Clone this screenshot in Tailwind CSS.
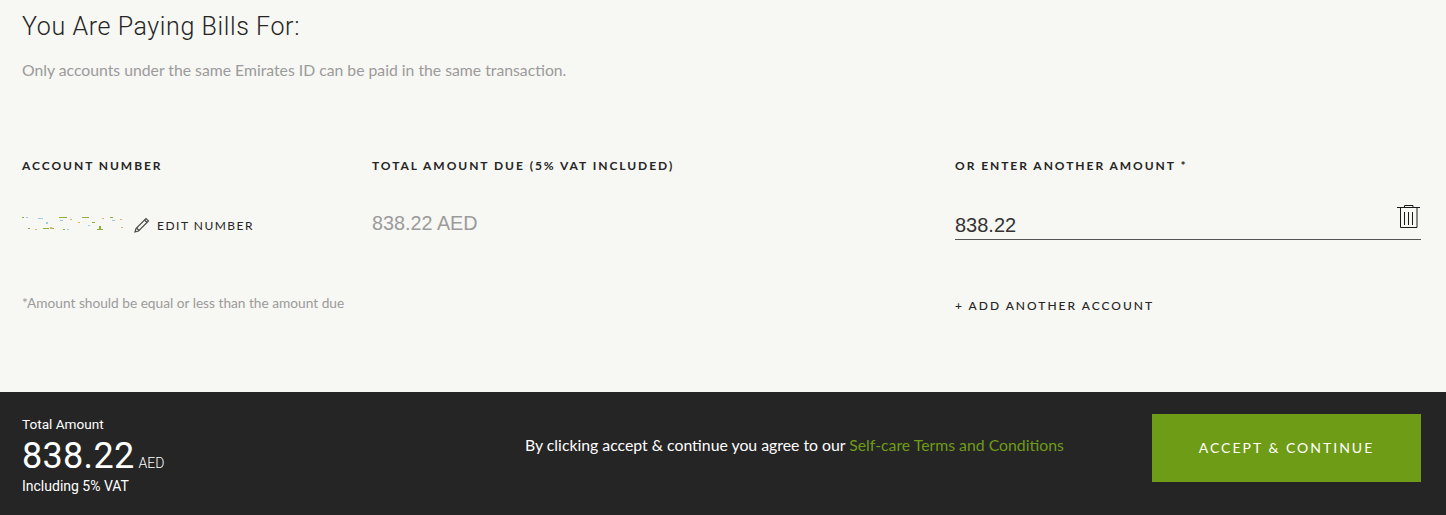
<!DOCTYPE html>
<html lang="en">
<head>
    <meta charset="UTF-8">
    <title>Pay Bills</title>
    <script src="https://cdn.jsdelivr.net/npm/@tailwindcss/browser@4"></script>
</head>
<body class="bg-[#f7f7f3] font-['Lato',sans-serif]">
    <div class="w-[1446px] h-[515px] flex flex-col overflow-hidden">

        <!-- Main section -->
        <div class="h-[392px] pl-[22px] pr-[25px]">
            <h1 class="pt-[10px] h-[44px] text-[25px] leading-[34px] tracking-[0.6px] font-light text-[#252525] font-['Roboto',sans-serif]">You Are Paying Bills For:</h1>
            <p class="mt-[16px] h-[20px] text-[15.75px] leading-[20px] text-[#9b9b9b]">Only accounts under the same Emirates ID can be paid in the same transaction.</p>

            <!-- Labels -->
            <div class="mt-[76px] grid grid-cols-[350px_583px_466px] text-[12px] leading-[20px] font-bold tracking-[1.95px] text-[#252525]">
                <div>ACCOUNT NUMBER</div>
                <div>TOTAL AMOUNT DUE (5% VAT INCLUDED)</div>
                <div>OR ENTER ANOTHER AMOUNT *</div>
            </div>

            <!-- Row -->
            <div class="mt-[24px] grid grid-cols-[350px_583px_466px] h-[40px]">
                <div class="flex items-start pt-[16px]">
                    <!-- masked account number -->
                    <svg width="104" height="16" viewBox="0 0 104 16" class="block">
                        <g fill="#8fae3c"><rect x="0" y="1" width="2" height="1"/><rect x="6" y="12" width="2" height="1"/><rect x="21" y="12" width="6" height="1"/><rect x="37" y="1" width="8" height="1"/><rect x="41" y="13" width="2" height="1"/><rect x="60" y="1" width="7" height="1"/><rect x="70" y="6" width="3" height="1"/><rect x="75" y="13" width="6" height="1"/><rect x="88" y="1" width="3" height="1"/><rect x="77" y="10" width="2" height="3"/><rect x="30" y="12" width="2" height="1"/></g>
                        <g fill="#9ccbe4"><rect x="4" y="1" width="2" height="1"/><rect x="16" y="2" width="5" height="1"/><rect x="24" y="6" width="2" height="2"/><rect x="45" y="13" width="2" height="1"/><rect x="90" y="4" width="3" height="1"/><rect x="38" y="4" width="3" height="1"/><rect x="66" y="9" width="2" height="1"/></g>
                        <g fill="#e0b273"><rect x="28" y="11" width="2" height="2"/><rect x="48" y="3" width="2" height="1"/><rect x="80" y="2" width="2" height="1"/><rect x="98" y="3" width="2" height="1"/><rect x="99" y="11" width="2" height="1"/><rect x="13" y="13" width="2" height="1"/><rect x="56" y="6" width="2" height="1"/></g>
                    </svg>
                    <svg width="16" height="16" viewBox="0 0 16 16" fill="none" stroke="#4a4a4a" stroke-width="1.2" class="ml-[8px] mt-[1px] block">
                        <path d="M1 15l1-3.500L12 1.500l2.500 2.500L4.500 14z"/>
                        <path d="M2.500 11l2.500 2.500M10.500 3l2.500 2.500"/>
                    </svg>
                    <span class="ml-[7px] mt-[3px] text-[12px] leading-[14px] tracking-[1.5px] text-[#252525]">EDIT NUMBER</span>
                </div>
                <div class="text-[19.8px] leading-[24px] pt-[11px] text-[#9b9b9b] font-['Liberation_Sans',sans-serif]">838.22 AED</div>
                <div class="relative h-[40px] border-b border-[#555] font-['Liberation_Sans',sans-serif] text-[20px] leading-[24px] text-[#333]">
                    <div class="pt-[13px]">838.22</div>
                    <svg width="24" height="24" viewBox="0 0 24 24" fill="none" stroke="#1a1a1a" class="absolute right-0 top-[4px]">
                        <path d="M0 3.500h23M7.500 3V1.500h8.500V3M3.500 4v19.500h16.500V4M7.500 8v13M11.500 8v13M15.500 8v13"/>
                    </svg>
                </div>
            </div>

            <!-- Note -->
            <div class="mt-[49px] grid grid-cols-[933px_466px]">
                <div class="pt-[4px] text-[13.7px] leading-[20px] text-[#9b9b9b]">*Amount should be equal or less than the amount due</div>
                <div class="pt-[7px] text-[12px] leading-[20px] tracking-[2px] font-medium text-[#252525]">+ ADD ANOTHER ACCOUNT</div>
            </div>
        </div>

        <!-- Footer -->
        <div class="h-[123px] bg-[#252525] pl-[22px] pr-[25px] flex items-center text-white">
            <div class="w-[503px] pt-[2px] font-['Roboto',sans-serif]">
                <div class="text-[13.6px] leading-[18px]">Total Amount</div>
                <div class="mt-[3px] flex items-baseline h-[40px]">
                    <span class="text-[36px] leading-[40px] tracking-[0.3px]">838.22</span>
                    <span class="ml-[4px] text-[14px] font-light">AED</span>
                </div>
                <div class="mt-[1px] text-[14px] leading-[18px]">Including 5% VAT</div>
            </div>
            <div class="w-[627px] -mt-[17px] text-[15.8px] leading-[20px]">By clicking accept &amp; continue you agree to our <span class="text-[#6f9c17]">Self-care Terms and Conditions</span></div>
            <button class="w-[269px] h-[68px] pb-[2px] self-start mt-[22px] bg-[#6f9c17] text-white text-[14px] tracking-[2px]">ACCEPT &amp; CONTINUE</button>
        </div>
    </div>
</body>
</html>
